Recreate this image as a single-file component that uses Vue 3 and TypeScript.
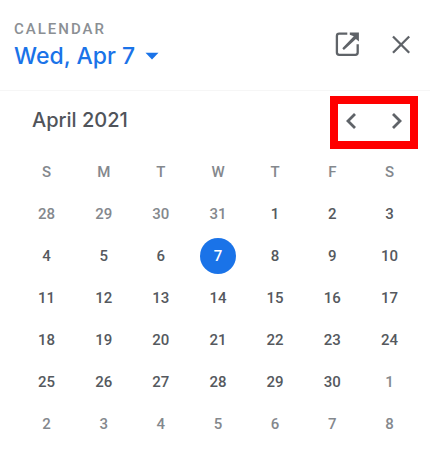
<script setup lang="ts">
interface Day {
  label: number
  outside: boolean
  selected: boolean
}

const weekdays: { short: string; full: string }[] = [
  { short: 'S', full: 'Sunday' },
  { short: 'M', full: 'Monday' },
  { short: 'T', full: 'Tuesday' },
  { short: 'W', full: 'Wednesday' },
  { short: 'T', full: 'Thursday' },
  { short: 'F', full: 'Friday' },
  { short: 'S', full: 'Saturday' },
]

const year = 2021
const month = 3
const selectedDay = 7

// Six weeks, starting on the Sunday on or before the first of the month.
const leading = new Date(year, month, 1).getDay()
const weeks: Day[][] = Array.from({ length: 6 }, (_, w) =>
  Array.from({ length: 7 }, (_, d) => {
    const date = new Date(year, month, 1 - leading + w * 7 + d)
    const outside = date.getMonth() !== month
    return {
      label: date.getDate(),
      outside,
      selected: !outside && date.getDate() === selectedDay,
    }
  }),
)
</script>

<template>
  <main class="panel">
    <header class="header">
      <div class="heading">
        <span class="app-name">CALENDAR</span>
        <button class="date-button" type="button">
          Wed, Apr 7
          <svg class="caret" viewBox="0 0 14 8" aria-hidden="true">
            <path d="M0.5 0.8h13L7 7.5z" fill="currentColor" />
          </svg>
        </button>
      </div>
      <div class="actions">
        <button class="icon-button" type="button" aria-label="Open in new tab">
          <svg viewBox="0 0 28 28" aria-hidden="true">
            <path
              d="M14.3 3.6H6.2Q3.9 3.6 3.9 5.9V22.5Q3.9 24.8 6.2 24.8H22.4Q24.7 24.8 24.7 22.5V14.3"
              fill="none" stroke="currentColor" stroke-width="2.3"
            />
            <path d="M16.8 2.4h9.1v9l-3-2.4L10.9 19.9 9.3 18.3 20.8 6.2 16.8 4.7z" fill="currentColor" />
          </svg>
        </button>
        <button class="icon-button" type="button" aria-label="Close">
          <svg viewBox="0 0 28 28" aria-hidden="true">
            <path d="M6 6.5l16.2 16.2M22.2 6.5L6 22.7" fill="none" stroke="currentColor" stroke-width="2.3" />
          </svg>
        </button>
      </div>
    </header>

    <section class="calendar">
      <div class="month-bar">
        <h1 class="month">April 2021</h1>
        <nav class="pager" aria-label="Month">
          <button class="page-button" type="button" aria-label="Previous month">
            <svg viewBox="0 0 24 24" aria-hidden="true">
              <path d="M16 5L9 12l7 7" fill="none" stroke="currentColor" stroke-width="2.8" />
            </svg>
          </button>
          <button class="page-button" type="button" aria-label="Next month">
            <svg viewBox="0 0 24 24" aria-hidden="true">
              <path d="M8 5l7 7-7 7" fill="none" stroke="currentColor" stroke-width="2.8" />
            </svg>
          </button>
        </nav>
      </div>

      <table class="grid">
        <thead>
          <tr>
            <th v-for="day in weekdays" :key="day.full" scope="col" :abbr="day.full">{{ day.short }}</th>
          </tr>
        </thead>
        <tbody>
          <tr v-for="(week, w) in weeks" :key="w">
            <td v-for="(day, d) in week" :key="d">
              <button
                class="day"
                :class="{ outside: day.outside, selected: day.selected }"
                :aria-pressed="day.selected"
                type="button"
              >{{ day.label }}</button>
            </td>
          </tr>
        </tbody>
      </table>
    </section>
  </main>
</template>

<style>
body {
  background: #fff;
}
</style>

<style scoped>
.panel {
  font-family: Roboto, "Liberation Sans", sans-serif;
  color: #5f6368;
}

button {
  margin: 0;
  padding: 0;
  border: 0;
  background: none;
  color: inherit;
  font: inherit;
  cursor: pointer;
}

svg {
  display: block;
}

.header {
  display: flex;
  justify-content: space-between;
  align-items: flex-start;
  padding: 19px 15px 17px 14px;
  border-bottom: 1px solid #f6f6f6;
}

.heading {
  display: flex;
  flex-direction: column;
  align-items: flex-start;
}

.app-name {
  font-size: 15px;
  line-height: 20px;
  font-weight: 500;
  letter-spacing: 2px;
  color: #8b8f94;
}

.date-button {
  display: flex;
  align-items: center;
  gap: 10px;
  font-family: Inter, "Liberation Sans", sans-serif;
  font-size: 23px;
  line-height: 34px;
  font-weight: 500;
  color: #1a73e8;
}

.caret {
  width: 14px;
  height: 8px;
}

.actions {
  display: flex;
  align-items: center;
  gap: 26px;
  padding-top: 11px;
}

.icon-button svg {
  width: 28px;
  height: 28px;
}

.calendar {
  padding: 5px 12px 18px 18px;
}

.month-bar {
  display: flex;
  align-items: center;
  justify-content: space-between;
  padding-left: 14px;
}

.month {
  margin: 0;
  padding-bottom: 5px;
  font-family: Inter, "Liberation Sans", sans-serif;
  font-size: 20px;
  line-height: 28px;
  font-weight: 500;
  color: #50545a;
}

.pager {
  display: flex;
  align-items: center;
  gap: 22px;
  padding: 5px 1px 8px;
  border: 8px solid #f00;
}

.page-button svg {
  width: 24px;
  height: 24px;
}

.grid {
  width: 100%;
  margin-top: 2px;
  border-collapse: collapse;
  table-layout: fixed;
}

.grid th,
.grid td {
  height: 42px;
  padding: 0;
  text-align: center;
  font-size: 15px;
  line-height: 20px;
  font-weight: 500;
}

.grid th {
  color: #84888d;
}

.day {
  width: 36px;
  height: 36px;
  border-radius: 50%;
  color: #55595e;
}

.day.outside {
  color: #84888d;
}

.day.selected {
  background: #1a73e8;
  color: #fff;
}
</style>
